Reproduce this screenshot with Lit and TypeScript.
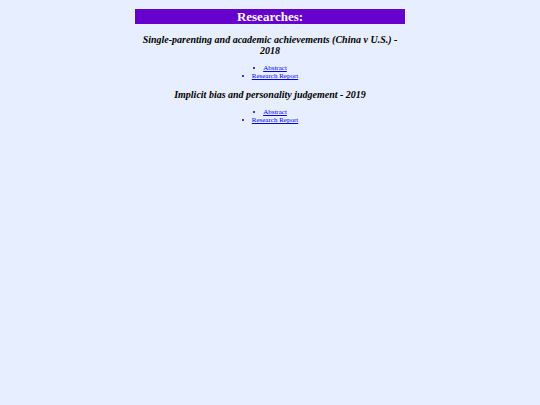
import { LitElement, html, css } from "lit";
import { customElement } from "lit/decorators.js";

const studies = [
  { title: "Single-parenting and academic achievements (China v U.S.) - 2018" },
  { title: "Implicit bias and personality judgement - 2019" },
];

@customElement("app-root")
export class AppRoot extends LitElement {
  static styles = css`
    :host {
      display: block;
      box-sizing: border-box;
      min-height: 100vh;
      padding-top: 9px;
      background: #e6eeff;
      color: #000;
      font-family: "Liberation Serif", "Times New Roman", serif;
      text-align: center;
    }
    .page {
      width: 50%;
      margin: 0 auto;
    }
    .heading {
      margin: 0 0 10px;
      background: #6600cc;
      color: #fff;
      font-size: 13px;
      line-height: 15px;
      font-weight: bold;
    }
    .title {
      margin: 9px 0 8px;
      font-size: 10px;
      line-height: 11px;
      font-style: italic;
      font-weight: bold;
    }
    .links {
      margin: 0;
      padding: 0;
      font-size: 7px;
      line-height: 8px;
      list-style: inside disc;
      color: #000099;
    }
    a {
      color: #0000ee;
    }
  `;

  render() {
    return html`
      <main class="page">
        <h1 class="heading">Researches:</h1>
        ${studies.map(
          (s) => html`
            <section>
              <h2 class="title">${s.title}</h2>
              <ul class="links">
                <li><a href="#">Abstract</a></li>
                <li><a href="#">Research Report</a></li>
              </ul>
            </section>
          `
        )}
      </main>
    `;
  }
}
